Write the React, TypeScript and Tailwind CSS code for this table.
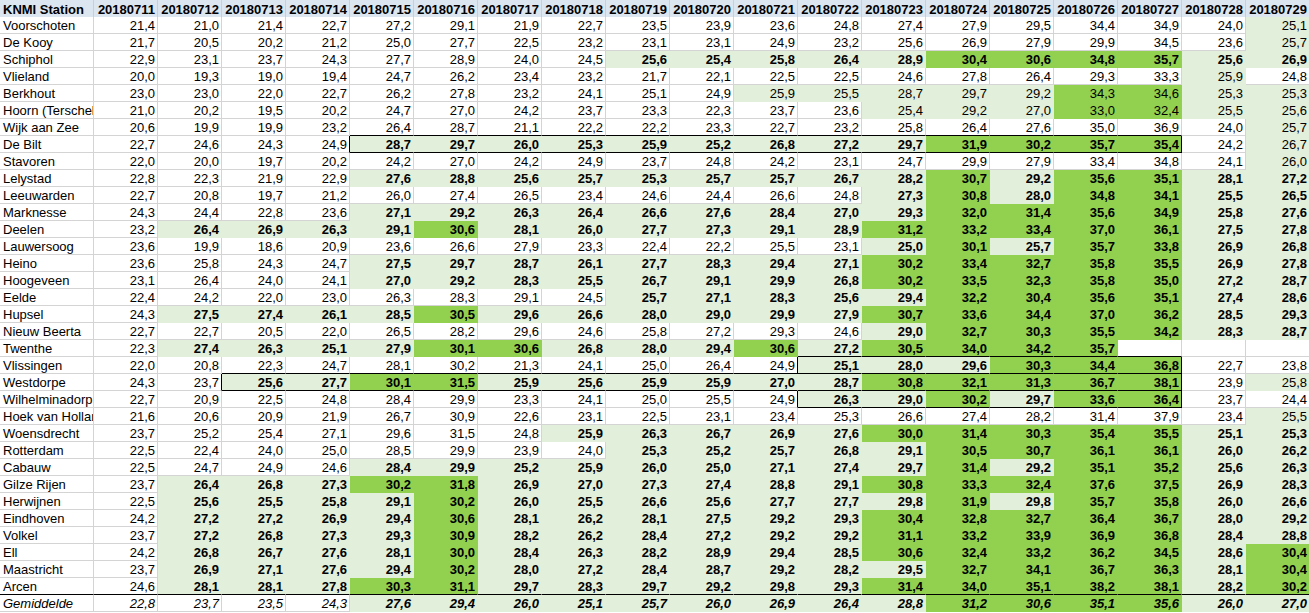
const dates = ['20180711','20180712','20180713','20180714','20180715','20180716','20180717','20180718','20180719','20180720','20180721','20180722','20180723','20180724','20180725','20180726','20180727','20180728','20180729'];

// name, values, fill runs (w white, l light green, L light green bold, g green, G green bold, e empty)
const rows: [string, string, string][] = [
  ['Voorschoten', '21,4 21,0 21,4 22,7 27,2 29,1 21,9 22,7 23,5 23,9 23,6 24,8 27,4 27,9 29,5 34,4 34,9 24,0 25,1', 'w18 l1'],
  ['De Kooy', '21,7 20,5 20,2 21,2 25,0 27,7 22,5 23,2 23,1 23,1 24,9 23,2 25,6 26,9 27,9 29,9 34,5 23,6 25,7', 'w18 l1'],
  ['Schiphol', '22,9 23,1 23,7 24,3 27,7 28,9 24,0 24,5 25,6 25,4 25,8 26,4 28,9 30,4 30,6 34,8 35,7 25,6 26,9', 'w8 L5 G4 L2'],
  ['Vlieland', '20,0 19,3 19,0 19,4 24,7 26,2 23,4 23,2 21,7 22,1 22,5 22,5 24,6 27,8 26,4 29,3 33,3 25,9 24,8', 'w17 l1 w1'],
  ['Berkhout', '23,0 23,0 22,0 22,7 26,2 27,8 23,2 24,1 25,1 24,9 25,9 25,5 28,7 29,7 29,2 34,3 34,6 25,3 25,3', 'w10 l5 g2 l2'],
  ['Hoorn (Terschel', '21,0 20,2 19,5 20,2 24,7 27,0 24,2 23,7 23,3 22,3 23,7 23,6 25,4 29,2 27,0 33,0 32,4 25,5 25,6', 'w12 l3 g2 l2'],
  ['Wijk aan Zee', '20,6 19,9 19,9 23,2 26,4 28,7 21,1 22,2 22,2 23,3 22,7 23,2 25,8 26,4 27,6 35,0 36,9 24,0 25,7', 'w18 l1'],
  ['De Bilt', '22,7 24,6 24,3 24,9 28,7 29,7 26,0 25,3 25,9 25,2 26,8 27,2 29,7 31,9 30,2 35,7 35,4 24,2 26,7', 'w4 L9 G4 w1 l1'],
  ['Stavoren', '22,0 20,0 19,7 20,2 24,2 27,0 24,2 24,9 23,7 24,8 24,2 23,1 24,7 29,9 27,9 33,4 34,8 24,1 26,0', 'w18 l1'],
  ['Lelystad', '22,8 22,3 21,9 22,9 27,6 28,8 25,6 25,7 25,3 25,7 25,7 26,7 28,2 30,7 29,2 35,6 35,1 28,1 27,2', 'w4 L9 G1 L1 G2 L2'],
  ['Leeuwarden', '22,7 20,8 19,7 21,2 26,0 27,4 26,5 23,4 24,6 24,4 26,6 24,8 27,3 30,8 28,0 34,8 34,1 25,5 26,5', 'w12 L1 G1 L1 G2 L2'],
  ['Marknesse', '24,3 24,4 22,8 23,6 27,1 29,2 26,3 26,4 26,6 27,6 28,4 27,0 29,3 32,0 31,4 35,6 34,9 25,8 27,6', 'w4 L9 G4 L2'],
  ['Deelen', '23,2 26,4 26,9 26,3 29,1 30,6 28,1 26,0 27,7 27,3 29,1 28,9 31,2 33,2 33,4 37,0 36,1 27,5 27,8', 'w1 L4 G1 L6 G5 L2'],
  ['Lauwersoog', '23,6 19,9 18,6 20,9 23,6 26,6 27,9 23,3 22,4 22,2 25,5 23,1 25,0 30,1 25,7 35,7 33,8 26,9 26,8', 'w12 L1 G1 L1 G2 L2'],
  ['Heino', '23,6 25,8 24,3 24,7 27,5 29,7 28,7 26,1 27,7 28,3 29,4 27,1 30,2 33,4 32,7 35,8 35,5 26,9 27,8', 'w4 L8 G5 L2'],
  ['Hoogeveen', '23,1 26,4 24,0 24,1 27,0 29,2 28,3 25,5 26,7 29,1 29,9 26,8 30,2 33,5 32,3 35,8 35,0 27,2 28,7', 'w4 L8 G5 L2'],
  ['Eelde', '22,4 24,2 22,0 23,0 26,3 28,3 29,1 24,5 25,7 27,1 28,3 25,6 29,4 32,2 30,4 35,6 35,1 27,4 28,6', 'w8 L5 G4 L2'],
  ['Hupsel', '24,3 27,5 27,4 26,1 28,5 30,5 29,6 26,6 28,0 29,0 29,9 27,9 30,7 33,6 34,4 37,0 36,2 28,5 29,3', 'w1 L4 G1 L6 G5 L2'],
  ['Nieuw Beerta', '22,7 22,7 20,5 22,0 26,5 28,2 29,6 24,6 25,8 27,2 29,3 24,6 29,0 32,7 30,3 35,5 34,2 28,3 28,7', 'w12 L1 G4 L2'],
  ['Twenthe', '22,3 27,4 26,3 25,1 27,9 30,1 30,6 26,8 28,0 29,4 30,6 27,2 30,5 34,0 34,2 35,7 - - -', 'w1 L4 G2 L3 G1 L1 G4 e3'],
  ['Vlissingen', '22,0 20,8 22,3 24,7 28,1 30,2 21,3 24,1 25,0 26,4 24,9 25,1 28,0 29,6 30,3 34,4 36,8 22,7 23,8', 'w11 L3 G3 w2'],
  ['Westdorpe', '24,3 23,7 25,6 27,7 30,1 31,5 25,9 25,6 25,9 25,9 27,0 28,7 30,8 32,1 31,3 36,7 38,1 23,9 25,8', 'w2 L2 G2 L6 G5 w1 l1'],
  ['Wilhelminadorp', '22,7 20,9 22,5 24,8 28,4 29,9 23,3 24,1 25,0 25,5 24,9 26,3 29,0 30,2 29,7 33,6 36,4 23,7 24,4', 'w11 L2 G1 L1 G2 w2'],
  ['Hoek van Hollar', '21,6 20,6 20,9 21,9 26,7 30,9 22,6 23,1 22,5 23,1 23,4 25,3 26,6 27,4 28,2 31,4 37,9 23,4 25,5', 'w18 l1'],
  ['Woensdrecht', '23,7 25,2 25,4 27,1 29,6 31,5 24,8 25,9 26,3 26,7 26,9 27,6 30,0 31,4 30,3 35,4 35,5 25,1 25,3', 'w7 L5 G5 L2'],
  ['Rotterdam', '22,5 22,4 24,0 25,0 28,5 29,9 23,9 24,0 25,3 25,2 25,7 26,8 29,1 30,5 30,7 36,1 36,1 26,0 26,2', 'w8 L5 G4 L2'],
  ['Cabauw', '22,5 24,7 24,9 24,6 28,4 29,9 25,2 25,9 26,0 25,0 27,1 27,4 29,7 31,4 29,2 35,1 35,2 25,6 26,3', 'w4 L9 G1 L1 G2 L2'],
  ['Gilze Rijen', '23,7 26,4 26,8 27,3 30,2 31,8 26,9 27,0 27,3 27,4 28,8 29,1 30,8 33,3 32,4 37,6 37,5 26,9 28,3', 'w1 L3 G2 L6 G5 L2'],
  ['Herwijnen', '22,5 25,6 25,5 25,8 29,1 30,2 26,0 25,5 26,6 25,6 27,7 27,7 29,8 31,9 29,8 35,7 35,8 26,0 26,6', 'w1 L4 G1 L7 G1 L1 G2 L2'],
  ['Eindhoven', '24,2 27,2 27,2 26,9 29,4 30,6 28,1 26,2 28,1 27,5 29,2 29,3 30,4 32,8 32,7 36,4 36,7 28,0 29,2', 'w1 L4 G1 L6 G5 L2'],
  ['Volkel', '23,7 27,2 26,8 27,3 29,3 30,9 28,2 26,2 28,4 27,2 29,2 29,2 31,1 33,2 33,9 36,9 36,8 28,4 28,8', 'w1 L4 G1 L6 G5 L2'],
  ['Ell', '24,2 26,8 26,7 27,6 28,1 30,0 28,4 26,3 28,2 28,9 29,4 28,5 30,6 32,4 33,2 36,2 34,5 28,6 30,4', 'w1 L4 G1 L6 G5 L1 G1'],
  ['Maastricht', '23,7 26,9 27,1 27,6 29,4 30,2 28,0 27,2 28,4 28,7 29,2 28,2 29,5 32,7 34,1 36,7 36,3 28,1 30,4', 'w1 L4 G1 L7 G4 L1 G1'],
  ['Arcen', '24,6 28,1 28,1 27,8 30,3 31,1 29,7 28,3 29,7 29,2 29,8 29,3 31,4 34,0 35,1 38,2 38,1 28,2 30,2', 'w1 L3 G2 L6 G5 L1 G1'],
  ['Gemiddelde', '22,8 23,7 23,5 24,3 27,6 29,4 26,0 25,1 25,7 26,0 26,9 26,4 28,8 31,2 30,6 35,1 35,6 26,0 27,0', 'w4 L9 G4 L2'],
];

// black outlined ranges: row index, first col, last col (-1 = station column)
const boxes = [
  { id: 1, r: 7, c0: 4, c1: 16 },
  { id: 2, r: 20, c0: 11, c1: 16 },
  { id: 3, r: 21, c0: 2, c1: 16 },
  { id: 4, r: 22, c0: 11, c1: 16 },
  { id: 5, r: 34, c0: -1, c1: 18 },
];

const LAST = rows.length - 1;

function boxId(r: number, c: number) {
  const b = boxes.find(b => b.r === r && c >= b.c0 && c <= b.c1);
  return b ? b.id : 0;
}

function expand(runs: string) {
  return runs.split(' ').flatMap(t => Array(parseInt(t.slice(1))).fill(t[0]) as string[]);
}

const fills: Record<string, string> = {
  w: 'bg-white',
  e: 'bg-white',
  l: 'bg-[#e2efda]',
  L: 'bg-[#e2efda] font-bold',
  g: 'bg-[#92d050]',
  G: 'bg-[#92d050] font-bold',
};

function edges(r: number, c: number, kind: string) {
  const plain = kind === 'w' || kind === 'e';
  let b = plain ? 'border-b-[#d4d4d4]' : 'border-b-transparent';
  let rt = plain ? 'border-r-[#d4d4d4]' : 'border-r-transparent';
  if (r < LAST && boxId(r, c) !== boxId(r + 1, c)) b = 'border-b-black';
  if (c < 18 && boxId(r, c) !== boxId(r, c + 1)) rt = 'border-r-black';
  return `${b} ${rt}`;
}

export default function App() {
  return (
    <div className="w-[1309px] h-[613px] overflow-hidden bg-white font-['Liberation_Sans',Arial,sans-serif] text-[13px] text-black">
      <div className="grid grid-cols-[94px_repeat(19,64px)] auto-rows-[17px]">
        <div className="h-[18px] flex items-end pl-[3px] leading-[14px] font-bold bg-[#dce6f1] border-b border-r border-[#c6cfdb] whitespace-nowrap">KNMI Station</div>
        {dates.map(d => (
          <div key={d} className="h-[18px] flex items-end justify-end pr-[2px] leading-[14px] font-bold bg-[#dce6f1] border-b border-r border-[#c6cfdb]">{d}</div>
        ))}
        {rows.map(([name, vals, runs], r) => {
          const kinds = expand(runs);
          const values = vals.split(' ');
          const avg = r === LAST;
          return [
            <div key={name} className={`flex items-end pl-[3px] leading-[14px] whitespace-nowrap overflow-hidden border-b border-r bg-white ${edges(r, -1, 'w')} ${avg ? 'italic' : ''}`}>{name}</div>,
            ...values.map((v, c) => (
              <div key={name + c} className={`flex items-end justify-end pr-[2px] leading-[14px] border-b border-r ${fills[kinds[c]]} ${edges(r, c, kinds[c])} ${avg ? 'italic' : ''}`}>
                {v === '-' ? '' : v}
              </div>
            )),
          ];
        })}
      </div>
    </div>
  );
}
